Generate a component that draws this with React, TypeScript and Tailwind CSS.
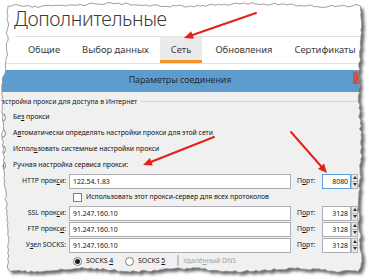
import React from "react";

// pseudo random, stable between renders
const rnd = (n: number) => {
  const x = Math.sin(n * 91.7) * 10000;
  return x - Math.floor(x);
};

const leftPts: [number, number][] = [
  [4, 8], [60, 7], [80, 3], [100, 2], [140, 3], [170, 4], [200, 6], [230, 8], [272, 8],
];
const leftX = (y: number) => {
  for (let i = 0; i < leftPts.length - 1; i++) {
    const [y0, x0] = leftPts[i];
    const [y1, x1] = leftPts[i + 1];
    if (y >= y0 && y <= y1) return x0 + ((x1 - x0) * (y - y0)) / (y1 - y0);
  }
  return 8;
};

function tornPath() {
  const pts: number[][] = [];
  let k = 1;
  const jag = (a: number) => (rnd(k++) - 0.5) * a;
  for (let x = 8; x <= 358; x += 3) pts.push([x, 5 + Math.sin(x / 23) * 1.3 + jag(2.2)]);
  for (let y = 6; y <= 268; y += 3) pts.push([360 + Math.sin(y / 19) * 1.2 + jag(2.2), y]);
  for (let x = 358; x >= 8; x -= 3) pts.push([x, 270 + Math.sin(x / 17) * 1.5 + jag(2.2)]);
  for (let y = 268; y >= 6; y -= 3) pts.push([leftX(y) + jag(2.2), y]);
  return "M" + pts.map((p) => p[0].toFixed(1) + " " + p[1].toFixed(1)).join("L") + "Z";
}

function Arrow({ x1, y1, x2, y2 }: { x1: number; y1: number; x2: number; y2: number }) {
  const a = Math.atan2(y2 - y1, x2 - x1);
  const len = 9;
  const w = 4;
  const bx = x2 - Math.cos(a) * len;
  const by = y2 - Math.sin(a) * len;
  const px = -Math.sin(a) * w;
  const py = Math.cos(a) * w;
  return (
    <g>
      <line x1={x1} y1={y1} x2={bx} y2={by} stroke="#e42118" strokeWidth={2} strokeLinecap="round" />
      <polygon points={`${x2},${y2} ${bx + px},${by + py} ${bx - px},${by - py}`} fill="#e42118" />
    </g>
  );
}

function Radio({ checked }: { checked?: boolean }) {
  return (
    <span className="w-[9px] h-[9px] rounded-full border border-[#7d7d7d] bg-white flex items-center justify-center shrink-0">
      {checked && <span className="w-[5px] h-[5px] rounded-full bg-[#1c1c1c]" />}
    </span>
  );
}

function Check({ disabled }: { disabled?: boolean }) {
  return (
    <span
      className={
        "w-[9px] h-[9px] border bg-white shrink-0 " + (disabled ? "border-[#c4c4c4]" : "border-[#7d7d7d]")
      }
    />
  );
}

function Port({ value, focus }: { value: string; focus?: boolean }) {
  return (
    <div className="flex items-center">
      <span className="w-[23px] text-[#1a1a1a]">
        П<u>о</u>рт:
      </span>
      <div className="flex ml-[2px]">
        <div
          className={
            "w-[29px] h-[15px] bg-white border text-right pr-[2px] leading-[13px] " +
            (focus ? "border-[#5a9fdc]" : "border-[#abadb3]")
          }
        >
          {value}
        </div>
        <div className="w-[7px] h-[15px] flex flex-col">
          <div className="flex-1 border border-[#b5b5b5] bg-[#e8e8e8] flex items-center justify-center">
            <svg width="4" height="3" viewBox="0 0 4 3">
              <path d="M0 3 L2 0 L4 3Z" fill="#333" />
            </svg>
          </div>
          <div className="flex-1 border border-t-0 border-[#b5b5b5] bg-[#e8e8e8] flex items-center justify-center">
            <svg width="4" height="3" viewBox="0 0 4 3">
              <path d="M0 0 L2 3 L4 0Z" fill="#333" />
            </svg>
          </div>
        </div>
      </div>
    </div>
  );
}

function ProxyRow({ label, value, port, focus }: { label: React.ReactNode; value: string; port: string; focus?: boolean }) {
  return (
    <div className="h-[16px] flex items-center">
      <div className="w-[67px] text-right pr-[1px] text-[#1a1a1a]">{label}</div>
      <div className="ml-[2px] w-[222px] h-[15px] bg-white border border-[#abadb3] pl-[3px] leading-[13px]">{value}</div>
      <div className="ml-[6px]">
        <Port value={port} focus={focus} />
      </div>
    </div>
  );
}

const tabs = [
  { t: "Общие", w: 54 },
  { t: "Выбор данных", w: 89 },
  { t: "Сеть", w: 42, active: true },
  { t: "Обновления", w: 84 },
  { t: "Сертификаты", w: 78 },
];

export default function App() {
  const edge = tornPath();
  return (
    <div className="relative w-[368px] h-[278px] overflow-hidden bg-white font-['Noto_Sans',sans-serif] text-[#141414]">
      {/* title */}
      <div className="h-[36px] pl-[14px] pt-[6px]">
        <div className="text-[19.5px] font-light leading-[26px] text-[#3b3b3b] tracking-[-0.4px]">Дополнительные</div>
      </div>

      {/* tabs */}
      <div className="h-[28px] border-b border-[#e2e2e2]">
        <div className="ml-[15px] h-[27px] border-t border-[#e2e2e2] flex pl-[2px] text-[9.4px] text-[#3a3a3a]">
          {tabs.map((tab) => (
            <div
              key={tab.t}
              style={{ width: tab.w }}
              className={
                "relative flex items-center justify-center " + (tab.active ? "bg-[#ebebeb]" : "")
              }
            >
              {tab.t}
              {tab.active && <span className="absolute left-0 right-0 bottom-0 h-[3px] bg-[#f39323]" />}
            </div>
          ))}
        </div>
      </div>

      <div className="h-[6px]" />

      {/* dialog title bar */}
      <div className="relative w-[360px] h-[22px] bg-[#5d9ccd] flex items-center justify-center text-[8.8px] text-[#1d2b38]">
        Параметры соединения
        <span className="absolute right-0 top-[2px] w-[7px] h-[12px] bg-[#c9514f]" />
      </div>

      {/* dialog body */}
      <div className="h-[186px] bg-[#f0f0f0] pt-[2px] text-[6.9px] leading-[10px] tracking-[-0.03px]">
        <div className="h-[15px] flex items-center -ml-[4px] text-[#1a1a1a]">
          <span>Настройка прокси для доступа в Интернет</span>
          <span className="flex-1 ml-[4px] mr-[6px] h-px bg-[#d5d5d5]" />
        </div>

        <div className="h-[16px] flex items-center gap-[7px] -ml-[3px]">
          <Radio />
          <span>
            Бе<u>з</u> прокси
          </span>
        </div>
        <div className="h-[16px] flex items-center gap-[7px] -ml-[3px]">
          <Radio />
          <span>
            А<u>в</u>томатически определять настройки прокси для этой сети
          </span>
        </div>
        <div className="h-[16px] flex items-center gap-[7px] -ml-[3px]">
          <Radio />
          <span>
            Испол<u>ь</u>зовать системные настройки прокси
          </span>
        </div>
        <div className="h-[16px] flex items-center gap-[7px] -ml-[3px]">
          <Radio checked />
          <span>Ручная настройка сервиса прокси:</span>
        </div>

        <ProxyRow
          label={
            <>
              HTTP прок<u>с</u>и:
            </>
          }
          value="122.54.1.83"
          port="8080"
          focus
        />
        <div className="h-[16px] flex items-center gap-[4px] pl-[73px]">
          <Check />
          <span>Использовать этот прокси-сервер для всех протоколов</span>
        </div>
        <ProxyRow
          label={
            <>
              SSL прок<u>с</u>и:
            </>
          }
          value="91.247.160.10"
          port="3128"
        />
        <ProxyRow
          label={
            <>
              FTP прокс<u>и</u>:
            </>
          }
          value="91.247.160.10"
          port="3128"
        />
        <ProxyRow
          label={
            <>
              У<u>з</u>ел SOCKS:
            </>
          }
          value="91.247.160.10"
          port="3128"
        />
        <div className="h-[16px] flex items-center pl-[73px]">
          <Radio checked />
          <span className="ml-[4px]">
            SOCKS <u>4</u>
          </span>
          <span className="ml-[12px]">
            <Radio />
          </span>
          <span className="ml-[4px]">
            SOCKS <u>5</u>
          </span>
          <span className="ml-[12px]">
            <Check disabled />
          </span>
          <span className="ml-[4px] text-[#a3a3a3]">
            Удалё<u>н</u>ный DNS
          </span>
        </div>
      </div>

      {/* torn paper edge, shadow and arrows */}
      <svg className="absolute inset-0 pointer-events-none" width="368" height="278" viewBox="0 0 368 278">
        <defs>
          <mask id="outside">
            <rect width="368" height="278" fill="white" />
            <path d={edge} fill="black" />
          </mask>
          <filter id="blur" x="-10%" y="-10%" width="120%" height="120%">
            <feGaussianBlur stdDeviation="1.6" />
          </filter>
        </defs>
        <path d={"M0 0H368V278H0Z" + edge} fill="white" fillRule="evenodd" />
        <g mask="url(#outside)">
          <path d={edge} transform="translate(3 3)" fill="#6b6b6b" filter="url(#blur)" />
        </g>
        <path d={edge} fill="none" stroke="#8c8c8c" strokeWidth="0.8" />
        <Arrow x1={256} y1={13} x2={184} y2={38} />
        <Arrow x1={214} y1={137} x2={143} y2={165} />
        <Arrow x1={291} y1={132} x2={327} y2={173} />
      </svg>
    </div>
  );
}
